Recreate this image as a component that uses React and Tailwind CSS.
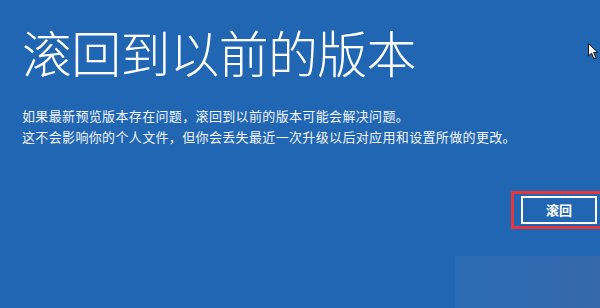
import React from "react";

const cjk = "font-['Noto_Sans_CJK_SC','Noto_Sans',sans-serif]";

export default function App() {
  return (
    <div className={`relative h-[308px] w-[600px] overflow-hidden bg-[#2166b2] text-white ${cjk}`}>
      <div className="flex flex-col pl-[22px] pt-[18px]">
        <h1 className="text-[50px] font-light leading-[66px] tracking-[-0.8px]">
          滚回到以前的版本
        </h1>

        <div className="mt-[21px] flex flex-col text-[13px] leading-[21px] tracking-[0.35px] text-[#f2f6fb]">
          <p>如果最新预览版本存在问题，滚回到以前的版本可能会解决问题。</p>
          <p>这不会影响你的个人文件，但你会丢失最近一次升级以后对应用和设置所做的更改。</p>
        </div>
      </div>

      <div className="mt-[44px] flex justify-end">
        <div className="mr-[-4px] border-[3px] border-[#e8353b] py-[2px] pl-[7px] pr-[4px]">
          <button className="flex h-[28px] w-[76px] items-center justify-center border-2 border-white text-[13px] font-bold">
            滚回
          </button>
        </div>
      </div>

      {/* faded watermark */}
      <div className="absolute bottom-0 right-0 h-[52px] w-[145px] bg-gradient-to-r from-[#2a6bb3] to-[#3568ab]" />

      {/* mouse pointer */}
      <svg
        className="absolute left-[588px] top-[43px]"
        width="11"
        height="17"
        viewBox="0 0 11 17"
      >
        <path
          d="M0.5 0.5 L0.5 13 L3.5 10.2 L6 15.8 L8 15 L5.6 9.5 L9.8 9.5 Z"
          fill="#ffffff"
          stroke="#111111"
          strokeWidth="1"
        />
      </svg>
    </div>
  );
}
